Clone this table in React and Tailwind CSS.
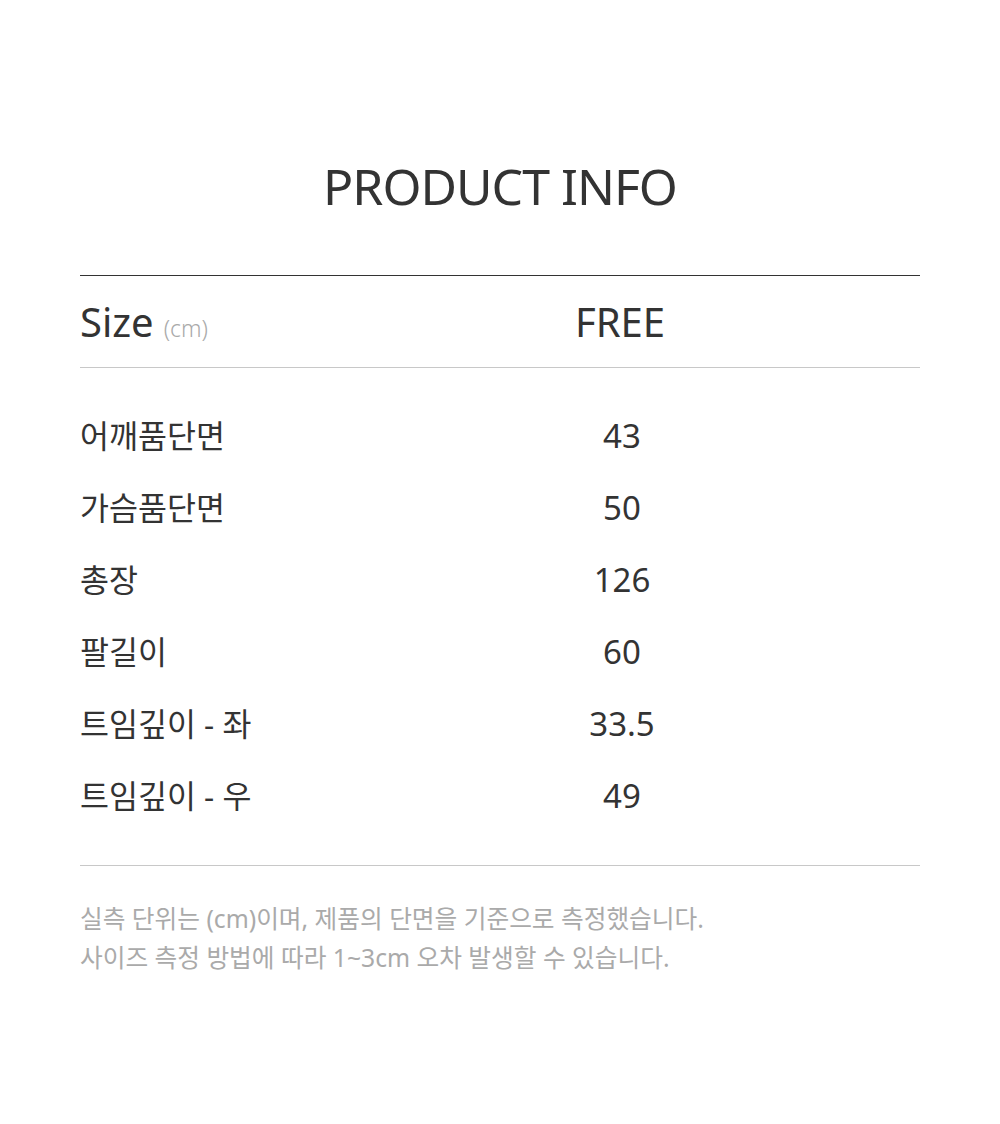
import React from "react";

const rows = [
  { label: "어깨품단면", value: "43" },
  { label: "가슴품단면", value: "50" },
  { label: "총장", value: "126" },
  { label: "팔길이", value: "60" },
  { label: "트임깊이 - 좌", value: "33.5" },
  { label: "트임깊이 - 우", value: "49" },
];

const font = { fontFamily: '"Noto Sans", "Noto Sans CJK KR", sans-serif' };

export default function App() {
  return (
    <div className="w-[1000px] h-[1124px] bg-white text-[#333]" style={font}>
      <div className="px-20 pt-[150px]">
        <h1 className="text-center text-[50px] leading-[72px] font-normal tracking-[-1px]">
          PRODUCT INFO
        </h1>

        {/* size header */}
        <div className="mt-[53px] border-t border-[#333] border-b border-b-[#c8c8c8] h-[93px] flex items-center">
          <div className="w-[455px] flex items-baseline">
            <span className="text-[40px]">Size</span>
            <span className="ml-[10px] text-[23px] text-[#aaa] font-light">(cm)</span>
          </div>
          <div className="w-[170px] text-center text-[40px]">FREE</div>
        </div>

        {/* measurements */}
        <div className="pt-[32px] pb-[33px] border-b border-[#c8c8c8]">
          {rows.map((r) => (
            <div key={r.label} className="flex items-center h-[72px]">
              <div className="w-[460px] text-[31.5px]">{r.label}</div>
              <div className="w-[164px] text-center text-[33px]">{r.value}</div>
            </div>
          ))}
        </div>

        {/* note */}
        <div className="pt-[33px] text-[24.7px] leading-[39px] text-[#aaa]">
          <p>실측 단위는 (cm)이며, 제품의 단면을 기준으로 측정했습니다.</p>
          <p>사이즈 측정 방법에 따라 1~3cm 오차 발생할 수 있습니다.</p>
        </div>
      </div>
    </div>
  );
}
